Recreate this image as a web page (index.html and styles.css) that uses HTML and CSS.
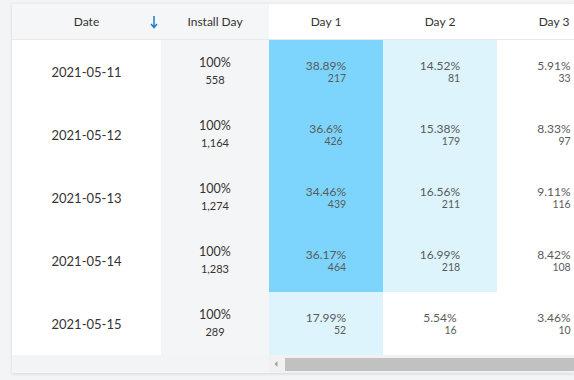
FILE: index.html
```html
<!DOCTYPE html>
<html>
<head>
<meta charset="utf-8">
<link rel="stylesheet" href="styles.css">
</head>
<body>
<div class="card">
  <div class="row head">
    <div class="c date">
      <span>Date</span>
      <svg class="sort" width="8" height="14" viewBox="0 0 8 14"><path d="M4 1 V12 M1 9 L4 12.5 L7 9" fill="none" stroke="#1f7dc4" stroke-width="1.5"/></svg>
    </div>
    <div class="c inst">Install Day</div>
    <div class="c day">Day 1</div>
    <div class="c day">Day 2</div>
    <div class="c day">Day 3</div>
  </div>

  <div class="row body">
    <div class="c date">2021-05-11</div>
    <div class="c inst"><div class="pct">100%</div><div class="num">558</div></div>
    <div class="c day hi"><div class="v"><div class="p">38.89%</div><div class="n">217</div></div></div>
    <div class="c day lo"><div class="v"><div class="p">14.52%</div><div class="n">81</div></div></div>
    <div class="c day"><div class="v"><div class="p">5.91%</div><div class="n">33</div></div></div>
  </div>
  <div class="row body">
    <div class="c date">2021-05-12</div>
    <div class="c inst"><div class="pct">100%</div><div class="num">1,164</div></div>
    <div class="c day hi"><div class="v"><div class="p">36.6%</div><div class="n">426</div></div></div>
    <div class="c day lo"><div class="v"><div class="p">15.38%</div><div class="n">179</div></div></div>
    <div class="c day"><div class="v"><div class="p">8.33%</div><div class="n">97</div></div></div>
  </div>
  <div class="row body">
    <div class="c date">2021-05-13</div>
    <div class="c inst"><div class="pct">100%</div><div class="num">1,274</div></div>
    <div class="c day hi"><div class="v"><div class="p">34.46%</div><div class="n">439</div></div></div>
    <div class="c day lo"><div class="v"><div class="p">16.56%</div><div class="n">211</div></div></div>
    <div class="c day"><div class="v"><div class="p">9.11%</div><div class="n">116</div></div></div>
  </div>
  <div class="row body">
    <div class="c date">2021-05-14</div>
    <div class="c inst"><div class="pct">100%</div><div class="num">1,283</div></div>
    <div class="c day hi"><div class="v"><div class="p">36.17%</div><div class="n">464</div></div></div>
    <div class="c day lo"><div class="v"><div class="p">16.99%</div><div class="n">218</div></div></div>
    <div class="c day"><div class="v"><div class="p">8.42%</div><div class="n">108</div></div></div>
  </div>
  <div class="row body">
    <div class="c date">2021-05-15</div>
    <div class="c inst"><div class="pct">100%</div><div class="num">289</div></div>
    <div class="c day lo"><div class="v"><div class="p">17.99%</div><div class="n">52</div></div></div>
    <div class="c day"><div class="v"><div class="p">5.54%</div><div class="n">16</div></div></div>
    <div class="c day"><div class="v"><div class="p">3.46%</div><div class="n">10</div></div></div>
  </div>

  <div class="row foot">
    <div class="fixed"></div>
    <div class="track">
      <svg class="arrow" width="6" height="8" viewBox="0 0 6 8"><path d="M4.5 1 L1.5 4 L4.5 7 Z" fill="#a3a3a3"/></svg>
      <div class="thumb"></div>
    </div>
  </div>
</div>
</body>
</html>
```

FILE: styles.css
```css
html, body {
  margin: 0;
  padding: 0;
  background: #f3f4f5;
  overflow: hidden;
  width: 574px;
  height: 380px;
}
body {
  font-family: Lato, "Open Sans", sans-serif;
  color: #333;
}
.card {
  margin: 3px 0 0 12px;
  width: 562px;
  overflow: hidden;
  background: #fff;
  box-shadow: 0 1px 3px rgba(0,0,0,0.12);
  border-top: 1px solid #eceef0;
}
.row {
  display: flex;
}
.c {
  flex: none;
  display: flex;
  flex-direction: column;
  align-items: center;
  justify-content: center;
}
.date { width: 149px; }
.inst { width: 108px; }
.day { width: 114px; }

.head {
  height: 35px;
  background: #f5f6f7;
  border-bottom: 1px solid #e6e8ea;
  font-size: 12px;
  color: #333;
}
.head .date {
  position: relative;
}
.sort {
  position: absolute;
  right: 3px;
  top: 11px;
}

.body { height: 63px; }
.body .date {
  font-size: 13px;
  color: #333;
  background: #fff;
  padding-top: 1px;
}
.body .inst {
  background: #f4f5f7;
  color: #333;
}
.pct { font-size: 12.5px; line-height: 16px; }
.num { font-size: 11px; line-height: 17px; }

.day { background: #fff; }
.day.hi { background: #7dd5fd; }
.day.lo { background: #ddf4fd; }
.v {
  text-align: right;
  color: #5a5a5a;
}
.p { font-size: 12px; line-height: 13px; }
.n { font-size: 10.5px; line-height: 12px; }

.foot {
  height: 18px;
}
.fixed {
  width: 257px;
  flex: none;
  background: #f3f4f6;
}
.track {
  flex: 1;
  display: flex;
  align-items: center;
  background: #f1f1f1;
  padding-left: 4px;
}
.arrow { flex: none; margin-right: 6px; }
.thumb {
  flex: 1;
  height: 13px;
  background: #c1c1c1;
}
```
